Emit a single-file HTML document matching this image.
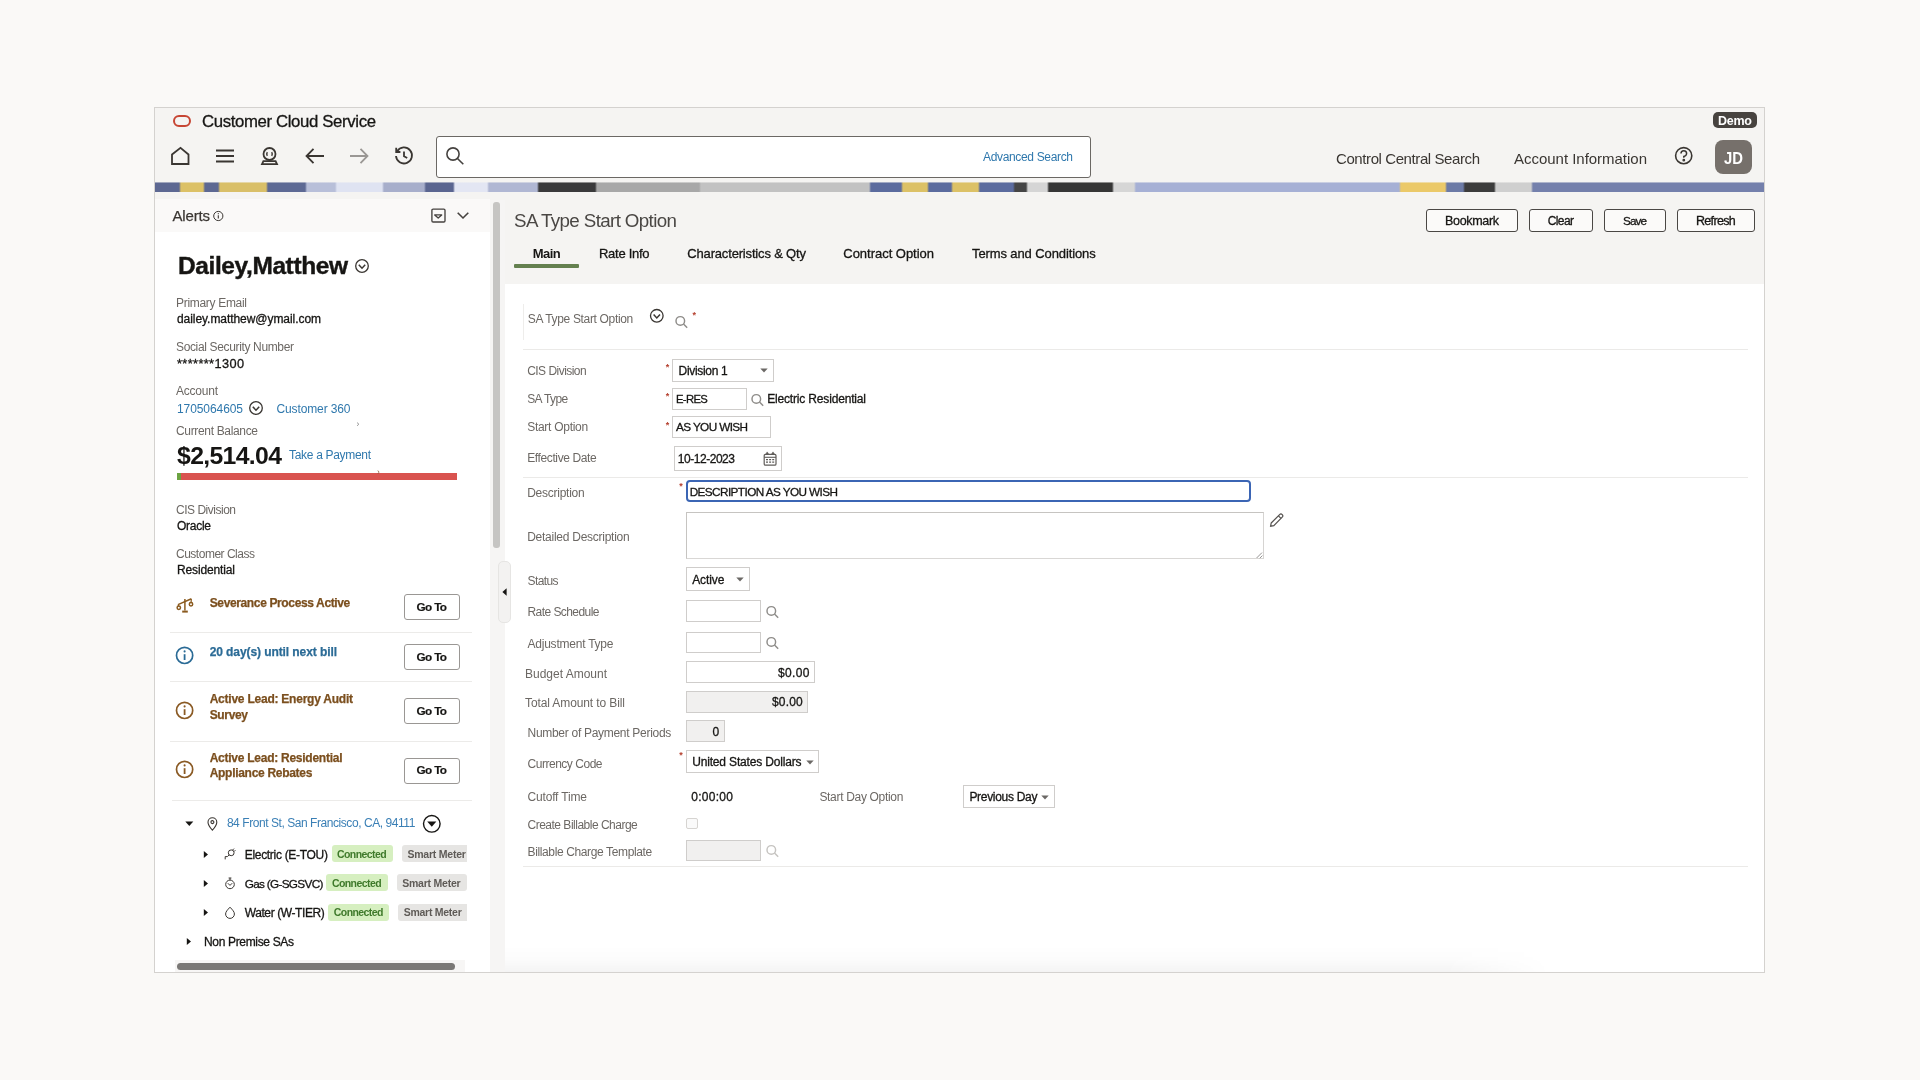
<!DOCTYPE html>
<html lang="en"><head><meta charset="utf-8"><title>SA Type Start Option</title>
<style>
html,body{margin:0;padding:0}
body{width:1920px;height:1080px;position:relative;overflow:hidden;background:#faf9f7;font-family:"Liberation Sans",sans-serif;color:#161513}
.a{position:absolute;box-sizing:border-box}
.t{position:absolute;white-space:nowrap;font-family:"Liberation Sans",sans-serif}
svg{position:absolute;overflow:visible}
.in{position:absolute;box-sizing:border-box;border:1px solid #cfcdcb;background:#fff}
.ro{background:#f1f0ef}
.btn{position:absolute;box-sizing:border-box;border:1px solid #4a4744;border-radius:3px;background:#fbfaf9}
.hr{position:absolute;height:1px;background:#ebeae8}
.bg{position:absolute;border-radius:3px}
#texts{position:absolute;left:0;top:0;width:1920px;height:1080px;will-change:transform}

</style></head>
<body>
<!-- app frame -->
<div class="a" style="left:154px;top:107px;width:1611px;height:866px;border:1px solid #d4d2cf;background:#f5f4f2"></div>
<!-- decorative strip -->
<div class="a" id="strip" style="left:155px;top:183px;width:1609px;height:9px;background:linear-gradient(90deg,#5d6892 0px,#5d6892 24px,#dcc166 26px,#dcc166 48px,#5d6892 50px,#5d6892 63px,#d9bf68 65px,#d9bf68 111px,#5d6994 113px,#5d6994 150px,#b8bfd9 152px,#b8bfd9 180px,#dfe3f2 182px,#dfe3f2 227px,#a7aecb 229px,#a7aecb 269px,#5a6590 271px,#5a6590 298px,#e3e6f3 300px,#e3e6f3 332px,#b0b7d3 334px,#b0b7d3 382px,#3a3a3b 384px,#3a3a3b 440px,#a8a8a8 442px,#a8a8a8 544px,#c2c2c2 546px,#c2c2c2 714px,#5b6b9e 716px,#5b6b9e 746px,#dcc166 748px,#dcc166 772px,#5b6b9e 774px,#5b6b9e 796px,#dcc166 798px,#dcc166 823px,#5b6b9e 825px,#5b6b9e 858px,#454545 860px,#454545 871px,#d5d5d5 873px,#d5d5d5 892px,#363636 894px,#363636 957px,#d6d6d6 959px,#d6d6d6 979px,#a6b0d5 981px,#a6b0d5 1244px,#ebc969 1246px,#ebc969 1290px,#6c7aa6 1292px,#6c7aa6 1308px,#3c3c3c 1310px,#3c3c3c 1339px,#cfcfcf 1341px,#cfcfcf 1376px,#7480ac 1378px,#7480ac 1608px)"></div>
<div class="a" style="left:155px;top:182px;width:1609px;height:1px;opacity:.55;background:linear-gradient(90deg,#5d6892 0px,#5d6892 24px,#dcc166 26px,#dcc166 48px,#5d6892 50px,#5d6892 63px,#d9bf68 65px,#d9bf68 111px,#5d6994 113px,#5d6994 150px,#b8bfd9 152px,#b8bfd9 180px,#dfe3f2 182px,#dfe3f2 227px,#a7aecb 229px,#a7aecb 269px,#5a6590 271px,#5a6590 298px,#e3e6f3 300px,#e3e6f3 332px,#b0b7d3 334px,#b0b7d3 382px,#3a3a3b 384px,#3a3a3b 440px,#a8a8a8 442px,#a8a8a8 544px,#c2c2c2 546px,#c2c2c2 714px,#5b6b9e 716px,#5b6b9e 746px,#dcc166 748px,#dcc166 772px,#5b6b9e 774px,#5b6b9e 796px,#dcc166 798px,#dcc166 823px,#5b6b9e 825px,#5b6b9e 858px,#454545 860px,#454545 871px,#d5d5d5 873px,#d5d5d5 892px,#363636 894px,#363636 957px,#d6d6d6 959px,#d6d6d6 979px,#a6b0d5 981px,#a6b0d5 1244px,#ebc969 1246px,#ebc969 1290px,#6c7aa6 1292px,#6c7aa6 1308px,#3c3c3c 1310px,#3c3c3c 1339px,#cfcfcf 1341px,#cfcfcf 1376px,#7480ac 1378px,#7480ac 1608px)"></div>

<!-- oracle logo -->
<div class="a" style="left:173px;top:115px;width:18px;height:12px;border:2px solid #c74634;border-radius:6px"></div>
<!-- Demo badge -->
<div class="a" style="left:1713px;top:112px;width:44px;height:16px;border-radius:5px;background:#47433f"></div>
<!-- search box -->
<div class="a" style="left:436px;top:136px;width:655px;height:42px;border:1px solid #6b6864;border-radius:3px;background:#fff"></div>
<!-- avatar -->
<div class="a" style="left:1715px;top:140px;width:37px;height:34px;border-radius:8px;background:#76706b"></div>

<!-- toolbar icons -->
<svg style="left:170px;top:146px" width="20" height="20" viewBox="0 0 20 20" fill="none" stroke="#3a3632" stroke-width="1.8" stroke-linejoin="miter"><path d="M2 18 V8.5 L10.5 1.8 L18.5 8.5 V18 Z"/></svg>
<svg style="left:215px;top:147px" width="20" height="18" viewBox="0 0 20 18" fill="none" stroke="#3a3632" stroke-width="1.8"><path d="M1 3.5H19M1 9H19M1 14.5H19"/></svg>
<svg style="left:259px;top:146px" width="20" height="20" viewBox="0 0 20 20" fill="none" stroke="#3a3632" stroke-width="1.8"><circle cx="10.5" cy="8" r="6"/><path d="M8.3 6.2 Q7.2 8 8.3 9.8M12.7 6.2 Q13.8 8 12.7 9.8" stroke-width="1.4"/><path d="M3 18.2 L4.4 15.2 H16.6 L18 18.2 Z"/></svg>
<svg style="left:305px;top:147px" width="20" height="18" viewBox="0 0 20 18" fill="none" stroke="#3a3632" stroke-width="1.8"><path d="M19 9H2M8.5 1.8 L1.5 9 L8.5 16.2"/></svg>
<svg style="left:349px;top:147px" width="20" height="18" viewBox="0 0 20 18" fill="none" stroke="#9a9794" stroke-width="1.8"><path d="M1 9H18M11.5 1.8 L18.5 9 L11.5 16.2"/></svg>
<svg style="left:394px;top:146px" width="20" height="20" viewBox="0 0 20 20" fill="none" stroke="#3a3632" stroke-width="1.8"><path d="M3.2 5.2 A8 8 0 1 1 2 10"/><path d="M2.2 1.8 V6 H6.4"/><path d="M10 5.5 V10.3 L13.2 12"/></svg>
<svg style="left:444.7px;top:146.2px" width="20" height="20" viewBox="0 0 20 20" fill="none" stroke="#45423f" stroke-width="1.6"><circle cx="8" cy="8" r="6.1"/><path d="M12.5 12.5 L18.3 18.3"/></svg>
<!-- help -->
<svg style="left:1674px;top:146.2px" width="20" height="20" viewBox="0 0 20 20" fill="none" stroke="#3a3632" stroke-width="1.6"><circle cx="9.7" cy="9.7" r="8.1"/><path d="M7 7.6 A2.8 2.8 0 1 1 9.8 10.4 V11.8" stroke-width="1.5"/><circle cx="9.8" cy="14.2" r="0.6" fill="#3a3632"/></svg>

<!-- LEFT PANEL -->
<div class="a" style="left:155px;top:199px;width:335px;height:773px;background:#fff"></div>
<div class="a" style="left:155px;top:199px;width:335px;height:33px;background:#faf9f8"></div>
<!-- gap + scrollbar -->
<div class="a" style="left:490px;top:192px;width:15px;height:780px;background:#f5f4f2"></div>
<div class="a" style="left:490px;top:200px;width:15px;height:772px;background:#f6f5f4"></div>
<div class="a" style="left:493px;top:202px;width:7px;height:345.5px;background:#c6c5c3;border-radius:3px"></div>

<!-- alerts header icons -->
<svg style="left:212px;top:210px" width="12" height="12" viewBox="0 0 12 12" fill="none" stroke="#3a3632" stroke-width="1"><circle cx="6.3" cy="6" r="4.6"/><path d="M6.3 5.3V8.6" stroke-width="1.1"/><circle cx="6.3" cy="3.7" r="0.6" fill="#3a3632" stroke="none"/></svg>
<svg style="left:430px;top:208px" width="16" height="16" viewBox="0 0 16 16" fill="none" stroke="#45423f" stroke-width="1.35" stroke-linejoin="round"><rect x="1.9" y="1.1" width="13.1" height="12.9" rx="1.2"/><path d="M4.7 6.9 H11.7 L8.2 10.1Z" stroke-width="1.3"/></svg>
<svg style="left:456px;top:211px" width="14" height="10" viewBox="0 0 14 10" fill="none" stroke="#45423f" stroke-width="1.6"><path d="M1.7 1.8 L7 7 L12.3 1.8"/></svg>
<!-- name chevron -->
<svg style="left:354px;top:258px" width="16" height="16" viewBox="0 0 16 16" fill="none" stroke="#3a3632" stroke-width="1.3"><circle cx="8" cy="8" r="6.3"/><path d="M4.8 6.8 L8 10.2 L11.2 6.8" stroke-width="1.5"/></svg>
<!-- account chevron -->
<svg style="left:248px;top:400px" width="16" height="16" viewBox="0 0 16 16" fill="none" stroke="#3a3632" stroke-width="1.3"><circle cx="8" cy="8" r="6.3"/><path d="M4.8 6.8 L8 10.2 L11.2 6.8" stroke-width="1.5"/></svg>
<!-- balance bar -->
<div class="a" style="left:177px;top:473px;width:280px;height:7px;background:#d9534f"></div>
<div class="a" style="left:177px;top:473px;width:4px;height:7px;background:#6ca342"></div>

<!-- alert rows -->
<div class="btn" style="left:404px;top:594px;width:56px;height:26px;background:#fff;border-color:#9a9794"></div>
<div class="btn" style="left:404px;top:643.5px;width:56px;height:26px;background:#fff;border-color:#9a9794"></div>
<div class="btn" style="left:404px;top:698px;width:56px;height:26px;background:#fff;border-color:#9a9794"></div>
<div class="btn" style="left:404px;top:757.5px;width:56px;height:26px;background:#fff;border-color:#9a9794"></div>
<div class="hr" style="left:170px;top:632px;width:302px;background:#ecebe9"></div>
<div class="hr" style="left:170px;top:681px;width:302px;background:#ecebe9"></div>
<div class="hr" style="left:170px;top:741px;width:302px;background:#ecebe9"></div>
<div class="hr" style="left:172px;top:800px;width:300px;background:#ecebe9"></div>
<!-- scales icon -->
<svg style="left:176px;top:597px" width="18" height="17" viewBox="0 0 18 17" fill="none" stroke="#8a5a1e" stroke-width="1.5"><path d="M2 7.6 L15.4 1.8"/><path d="M8.9 2 V13.6"/><path d="M6.2 14.6 H11.8" stroke-width="2"/><circle cx="2.8" cy="10.8" r="1.7"/><circle cx="15" cy="7.2" r="1.7"/><path d="M2.2 7.6 L2.7 9.2M15.3 2 L15.1 5.4" stroke-width="1.2"/></svg>
<!-- info icons -->
<svg style="left:175px;top:646px" width="19" height="19" viewBox="0 0 19 19" fill="none" stroke="#2b6b96" stroke-width="1.7"><circle cx="9.6" cy="9.4" r="8.1"/><path d="M9.6 8.2V14" stroke-width="1.8"/><circle cx="9.6" cy="5.4" r="1.05" fill="#2b6b96" stroke="none"/></svg>
<svg style="left:175px;top:700.5px" width="19" height="19" viewBox="0 0 19 19" fill="none" stroke="#8a5a24" stroke-width="1.7"><circle cx="9.6" cy="9.4" r="8.1"/><path d="M9.6 8.2V14" stroke-width="1.8"/><circle cx="9.6" cy="5.4" r="1.05" fill="#8a5a24" stroke="none"/></svg>
<svg style="left:175px;top:760px" width="19" height="19" viewBox="0 0 19 19" fill="none" stroke="#8a5a24" stroke-width="1.7"><circle cx="9.6" cy="9.4" r="8.1"/><path d="M9.6 8.2V14" stroke-width="1.8"/><circle cx="9.6" cy="5.4" r="1.05" fill="#8a5a24" stroke="none"/></svg>

<!-- premise tree -->
<svg style="left:185px;top:821px" width="9" height="6" viewBox="0 0 9 6"><path d="M0.3 0.5 H8.3 L4.3 5Z" fill="#161513"/></svg>
<svg style="left:207px;top:817px" width="11" height="14" viewBox="0 0 11 14" fill="none" stroke="#3a3632" stroke-width="1.1"><path d="M5.4 13.2 C2.4 9.8 1 7.6 1 5.2 A4.4 4.4 0 0 1 9.8 5.2 C9.8 7.6 8.4 9.8 5.4 13.2Z"/><circle cx="5.4" cy="5.1" r="1.5"/></svg>
<svg style="left:422px;top:814px" width="20" height="20" viewBox="0 0 20 20" fill="none" stroke="#161513" stroke-width="1.4"><circle cx="9.8" cy="9.8" r="8.3"/><path d="M5.2 7.6 H14.4 L9.8 12.8Z" fill="#161513" stroke="none"/></svg>
<svg style="left:203px;top:850px" width="6" height="9" viewBox="0 0 6 9"><path d="M0.8 0.9 V8.1 L5 4.5Z" fill="#161513"/></svg>
<svg style="left:203px;top:879px" width="6" height="9" viewBox="0 0 6 9"><path d="M0.8 0.9 V8.1 L5 4.5Z" fill="#161513"/></svg>
<svg style="left:203px;top:908px" width="6" height="9" viewBox="0 0 6 9"><path d="M0.8 0.9 V8.1 L5 4.5Z" fill="#161513"/></svg>
<svg style="left:186px;top:937px" width="6" height="9" viewBox="0 0 6 9"><path d="M0.8 0.9 V8.1 L5 4.5Z" fill="#161513"/></svg>
<!-- service icons -->
<svg style="left:224px;top:848px" width="12" height="12" viewBox="0 0 12 12" fill="none" stroke="#3a3632" stroke-width="1"><circle cx="7.2" cy="4.8" r="2.9"/><path d="M5.2 6.9 L3.4 8.6 H1.2 V11.4"/><path d="M8.6 2 L10 0.6M10 3.6 L11.4 2.2"/></svg>
<svg style="left:224px;top:877px" width="12" height="13" viewBox="0 0 12 13" fill="none" stroke="#3a3632" stroke-width="1"><circle cx="6" cy="7.4" r="4.3"/><path d="M6 3 V1M4.6 1 H7.4"/><path d="M3.8 6.2 L6 8.4 L8.2 6.2"/></svg>
<svg style="left:224px;top:906px" width="12" height="13" viewBox="0 0 12 13" fill="none" stroke="#3a3632" stroke-width="1"><path d="M6 1.2 C8.6 4 10.4 5.8 10.4 8 A4.4 4.4 0 0 1 1.6 8 C1.6 5.8 3.4 4 6 1.2Z"/></svg>
<!-- badges -->
<div class="bg" style="left:331.5px;top:845px;width:61px;height:17px;background:#d6efc0"></div>
<div class="bg" style="left:326.3px;top:874.4px;width:61.5px;height:17px;background:#d6efc0"></div>
<div class="bg" style="left:328px;top:904px;width:61px;height:17px;background:#d6efc0"></div>
<div class="bg" style="left:401.6px;top:845px;width:65.4px;height:17px;background:#e6e5e3;border-radius:3px 0 0 3px"></div>
<div class="bg" style="left:396.6px;top:874.4px;width:70px;height:17px;background:#e6e5e3"></div>
<div class="bg" style="left:398.4px;top:904px;width:68.6px;height:17px;background:#e6e5e3;border-radius:3px 0 0 3px"></div>
<!-- horizontal scrollbar -->
<div class="a" style="left:175px;top:960px;width:290px;height:12px;background:#f7f6f5"></div>
<div class="a" style="left:176.5px;top:962.6px;width:278.5px;height:7.8px;background:#7a7876;border-radius:4px"></div>

<!-- MAIN PANEL -->
<div class="a" style="left:505px;top:284px;width:1259px;height:688px;background:#fff"></div>
<div class="a" style="left:505px;top:946px;width:1045px;height:26px;background:linear-gradient(180deg,rgba(0,0,0,0) 0,rgba(0,0,0,0.012) 50%,rgba(0,0,0,0.045) 100%);-webkit-mask-image:linear-gradient(90deg,#000 90%,transparent)"></div>
<!-- tab underline -->
<div class="a" style="left:514px;top:264px;width:65px;height:4.3px;background:#64804f;border-radius:1px"></div>
<!-- buttons -->
<div class="btn" style="left:1426px;top:209px;width:92px;height:23px"></div>
<div class="btn" style="left:1528.5px;top:209px;width:64.5px;height:23px"></div>
<div class="btn" style="left:1604px;top:209px;width:62px;height:23px"></div>
<div class="btn" style="left:1676.5px;top:209px;width:78.5px;height:23px"></div>

<!-- form -->
<div class="a" style="left:523px;top:304px;width:1px;height:36px;background:#eeedeb"></div>
<div class="hr" style="left:523px;top:348.5px;width:1225px"></div>
<div class="hr" style="left:523px;top:477px;width:1225px"></div>
<div class="hr" style="left:523px;top:866.4px;width:1225px"></div>
<svg style="left:649px;top:308px" width="16" height="16" viewBox="0 0 16 16" fill="none" stroke="#3a3632" stroke-width="1.3"><circle cx="7.8" cy="7.8" r="6.3"/><path d="M4.6 6.6 L7.8 10 L11 6.6" stroke-width="1.5"/></svg>
<svg class="mag" style="left:675px;top:315px" width="14" height="14" viewBox="0 0 14 14" fill="none" stroke="#8f8d8a" stroke-width="1.45"><circle cx="5.3" cy="5.9" r="4.3"/><path d="M8.5 9.1 L12.2 12.8"/></svg>

<div class="in" style="left:672px;top:359px;width:102px;height:22.5px"></div>
<svg style="left:760px;top:368px" width="8" height="5" viewBox="0 0 8 5"><path d="M0.3 0.5 H7.7 L4 4.4Z" fill="#6b6865"/></svg>
<div class="in" style="left:672px;top:388px;width:75px;height:21.5px"></div>
<svg class="mag" style="left:750.5px;top:393px" width="14" height="14" viewBox="0 0 14 14" fill="none" stroke="#8f8d8a" stroke-width="1.45"><circle cx="5.3" cy="5.9" r="4.3"/><path d="M8.5 9.1 L12.2 12.8"/></svg>
<div class="in" style="left:672px;top:416px;width:99px;height:21.5px"></div>
<div class="in" style="left:674px;top:445.5px;width:107.5px;height:25px"></div>
<!-- calendar -->
<svg style="left:763px;top:450.5px" width="14" height="15" viewBox="0 0 14 15" fill="none" stroke="#5f5c59" stroke-width="1.2"><rect x="1.2" y="3.4" width="11.8" height="10.8" rx="1.3"/><path d="M1.2 6.3H13" stroke-width="1.1"/><path d="M2.6 3.4 L4.2 0.9 L5.8 3.4ZM8.4 3.4 L10 0.9 L11.6 3.4Z" fill="#5f5c59" stroke-width="0.6"/><path d="M3 8.6H11.2M3 11.2H11.2" stroke-width="1.3" stroke-dasharray="2 1.1"/></svg>

<div class="a" style="left:685.5px;top:480px;width:565px;height:22px;border:2px solid #3b65b4;border-radius:4px;background:#fff"></div>
<div class="in" style="left:685.5px;top:512px;width:578px;height:47px;border-color:#c6c4c1 #d6d4d2 #d9d7d5 #c6c4c1"></div>
<svg style="left:1256px;top:552px" width="7" height="7" viewBox="0 0 7 7" stroke="#8a8886" stroke-width="0.9"><path d="M6 0.6 L0.6 6M6.4 3.6 L3.8 6.2"/></svg>
<!-- pencil -->
<svg style="left:1269px;top:512px" width="16" height="16" viewBox="0 0 16 16" fill="none" stroke="#55524f" stroke-width="1.2"><path d="M2.2 11 L10.6 2.6 A1.7 1.7 0 0 1 13.2 5.2 L4.8 13.6 L1.6 14.2Z"/><path d="M9.4 3.8 L12 6.4"/></svg>

<div class="in" style="left:685.5px;top:567.4px;width:64px;height:23.4px"></div>
<svg style="left:736px;top:577px" width="8" height="5" viewBox="0 0 8 5"><path d="M0.3 0.5 H7.7 L4 4.4Z" fill="#6b6865"/></svg>
<div class="in" style="left:685.5px;top:600.4px;width:75px;height:21.2px"></div>
<svg class="mag" style="left:765.5px;top:604.5px" width="14" height="14" viewBox="0 0 14 14" fill="none" stroke="#8f8d8a" stroke-width="1.45"><circle cx="5.3" cy="5.9" r="4.3"/><path d="M8.5 9.1 L12.2 12.8"/></svg>
<div class="in" style="left:685.5px;top:632.3px;width:75px;height:20.6px"></div>
<svg class="mag" style="left:765.5px;top:636px" width="14" height="14" viewBox="0 0 14 14" fill="none" stroke="#8f8d8a" stroke-width="1.45"><circle cx="5.3" cy="5.9" r="4.3"/><path d="M8.5 9.1 L12.2 12.8"/></svg>
<div class="in" style="left:685.5px;top:661.4px;width:129px;height:21.2px"></div>
<div class="in ro" style="left:685.5px;top:691px;width:122.5px;height:21.5px"></div>
<div class="in ro" style="left:685.5px;top:720.4px;width:39.5px;height:21.2px"></div>
<div class="in" style="left:686px;top:750.3px;width:133px;height:23px"></div>
<svg style="left:805.5px;top:759.5px" width="8" height="5" viewBox="0 0 8 5"><path d="M0.3 0.5 H7.7 L4 4.4Z" fill="#6b6865"/></svg>
<div class="in" style="left:962.5px;top:785.3px;width:92.5px;height:22.5px"></div>
<svg style="left:1040.5px;top:794.5px" width="8" height="5" viewBox="0 0 8 5"><path d="M0.3 0.5 H7.7 L4 4.4Z" fill="#6b6865"/></svg>
<div class="a" style="left:685.5px;top:817.5px;width:12px;height:11.5px;border:1px solid #d6d4d1;border-radius:2px;background:#fafafa"></div>
<div class="in ro" style="left:685.5px;top:840px;width:75px;height:21px"></div>
<svg class="mag" style="left:765.5px;top:843.5px" width="14" height="14" viewBox="0 0 14 14" fill="none" stroke="#c6c4c1" stroke-width="1.45"><circle cx="5.3" cy="5.9" r="4.3"/><path d="M8.5 9.1 L12.2 12.8"/></svg>
<!-- splitter handle -->
<div class="a" style="left:497.5px;top:560.5px;width:13px;height:62.5px;background:#f3f2f1;border:1px solid #e6e5e3;border-radius:5px"></div>
<svg style="left:502.3px;top:587.5px" width="5" height="8" viewBox="0 0 5 8"><path d="M4.6 0.3 V7.7 L0.4 4 Z" fill="#161513"/></svg>

<div id="texts">
<span class="t" style="left:202px;top:111.56px;font-size:16.75px;line-height:19.262px;letter-spacing:-0.359px;-webkit-text-stroke:0.3px;">Customer Cloud Service</span>
<span class="t" style="left:1718px;top:114.48px;font-size:12.5px;line-height:14.375px;font-weight:700;color:#ffffff;letter-spacing:-0.245px;">Demo</span>
<span class="t" style="left:983px;top:150.94px;font-size:12.0px;line-height:13.800px;color:#2f78ad;letter-spacing:-0.338px;">Advanced Search</span>
<span class="t" style="left:1336px;top:150.18px;font-size:15.0px;line-height:17.250px;color:#3a3632;letter-spacing:-0.408px;">Control Central Search</span>
<span class="t" style="left:1514px;top:150.18px;font-size:15.0px;line-height:17.250px;color:#3a3632;letter-spacing:-0.023px;">Account Information</span>
<span class="t" style="left:1724px;top:149.10px;font-size:17.25px;line-height:19.837px;font-weight:700;color:#ffffff;transform:scaleX(0.86);transform-origin:0 0;">JD</span>
<span class="t" style="left:172.5px;top:207.18px;font-size:15.0px;line-height:17.250px;color:#3a3632;letter-spacing:-0.169px;-webkit-text-stroke:0.25px;">Alerts</span>
<span class="t" style="left:178px;top:252.42px;font-size:24.5px;line-height:28.175px;font-weight:700;letter-spacing:-0.399px;-webkit-text-stroke:0.4px;">Dailey,Matthew</span>
<span class="t" style="left:176px;top:296.94px;font-size:12.0px;line-height:13.800px;color:#6c6864;letter-spacing:-0.306px;">Primary Email</span>
<span class="t" style="left:177px;top:312.94px;font-size:12.0px;line-height:13.800px;letter-spacing:-0.058px;-webkit-text-stroke:0.3px;">dailey.matthew@ymail.com</span>
<span class="t" style="left:176px;top:340.94px;font-size:12.0px;line-height:13.800px;color:#6c6864;letter-spacing:-0.352px;">Social Security Number</span>
<span class="t" style="left:177px;top:357.25px;font-size:12.75px;line-height:14.662px;letter-spacing:0.389px;-webkit-text-stroke:0.3px;">*******1300</span>
<span class="t" style="left:176px;top:384.94px;font-size:12.0px;line-height:13.800px;color:#6c6864;letter-spacing:-0.227px;">Account</span>
<span class="t" style="left:177px;top:402.94px;font-size:12.0px;line-height:13.800px;color:#2f78ad;letter-spacing:-0.083px;">1705064605</span>
<span class="t" style="left:276.5px;top:402.94px;font-size:12.0px;line-height:13.800px;color:#2f78ad;letter-spacing:-0.125px;">Customer 360</span>
<span class="t" style="left:176px;top:424.94px;font-size:12.0px;line-height:13.800px;color:#6c6864;letter-spacing:-0.337px;">Current Balance</span>
<span class="t" style="left:177px;top:442.19px;font-size:24.75px;line-height:28.462px;font-weight:700;letter-spacing:-0.639px;">$2,514.04</span>
<span class="t" style="left:289px;top:448.94px;font-size:12.0px;line-height:13.800px;color:#2f78ad;letter-spacing:-0.311px;">Take a Payment</span>
<span class="t" style="left:176px;top:503.94px;font-size:12.0px;line-height:13.800px;color:#6c6864;letter-spacing:-0.487px;">CIS Division</span>
<span class="t" style="left:177px;top:519.94px;font-size:12.0px;line-height:13.800px;letter-spacing:-0.269px;-webkit-text-stroke:0.3px;">Oracle</span>
<span class="t" style="left:176px;top:547.94px;font-size:12.0px;line-height:13.800px;color:#6c6864;letter-spacing:-0.489px;">Customer Class</span>
<span class="t" style="left:177px;top:563.94px;font-size:12.0px;line-height:13.800px;letter-spacing:-0.138px;-webkit-text-stroke:0.3px;">Residential</span>
<span class="t" style="left:356.5px;top:420.40px;font-size:8.25px;line-height:9.487px;color:#777;">&rsaquo;</span>
<span class="t" style="left:377px;top:468.40px;font-size:8.25px;line-height:9.487px;color:#8a5a3a;">&rsaquo;</span>
<span class="t" style="left:209.7px;top:596.94px;font-size:12.0px;line-height:13.800px;font-weight:700;color:#7b4f1e;letter-spacing:-0.365px;-webkit-text-stroke:0.25px;">Severance Process Active</span>
<span class="t" style="left:209.7px;top:645.94px;font-size:12.0px;line-height:13.800px;font-weight:700;color:#2b6b96;letter-spacing:-0.086px;-webkit-text-stroke:0.25px;">20 day(s) until next bill</span>
<span class="t" style="left:209.7px;top:692.94px;font-size:12.0px;line-height:13.800px;font-weight:700;color:#7b4f1e;letter-spacing:-0.234px;-webkit-text-stroke:0.25px;">Active Lead: Energy Audit</span>
<span class="t" style="left:209.7px;top:708.94px;font-size:12.0px;line-height:13.800px;font-weight:700;color:#7b4f1e;letter-spacing:-0.346px;-webkit-text-stroke:0.25px;">Survey</span>
<span class="t" style="left:209.7px;top:751.94px;font-size:12.0px;line-height:13.800px;font-weight:700;color:#7b4f1e;letter-spacing:-0.257px;-webkit-text-stroke:0.25px;">Active Lead: Residential</span>
<span class="t" style="left:209.7px;top:766.94px;font-size:12.0px;line-height:13.800px;font-weight:700;color:#7b4f1e;letter-spacing:-0.292px;-webkit-text-stroke:0.25px;">Appliance Rebates</span>
<span class="t" style="left:416.5px;top:600.17px;font-size:11.75px;line-height:13.512px;font-weight:700;letter-spacing:-0.645px;-webkit-text-stroke:0.2px;">Go To</span>
<span class="t" style="left:416.5px;top:650.17px;font-size:11.75px;line-height:13.512px;font-weight:700;letter-spacing:-0.645px;-webkit-text-stroke:0.2px;">Go To</span>
<span class="t" style="left:416.5px;top:704.17px;font-size:11.75px;line-height:13.512px;font-weight:700;letter-spacing:-0.645px;-webkit-text-stroke:0.2px;">Go To</span>
<span class="t" style="left:416.5px;top:763.17px;font-size:11.75px;line-height:13.512px;font-weight:700;letter-spacing:-0.645px;-webkit-text-stroke:0.2px;">Go To</span>
<span class="t" style="left:226.9px;top:816.94px;font-size:12.0px;line-height:13.800px;color:#3a7fb5;letter-spacing:-0.442px;">84 Front St, San Francisco, CA, 94111</span>
<span class="t" style="left:244.7px;top:848.94px;font-size:12.0px;line-height:13.800px;letter-spacing:-0.299px;-webkit-text-stroke:0.3px;">Electric (E-TOU)</span>
<span class="t" style="left:244.7px;top:877.17px;font-size:11.75px;line-height:13.512px;letter-spacing:-0.679px;-webkit-text-stroke:0.3px;">Gas (G-SGSVC)</span>
<span class="t" style="left:244.7px;top:906.94px;font-size:12.0px;line-height:13.800px;letter-spacing:-0.402px;-webkit-text-stroke:0.3px;">Water (W-TIER)</span>
<span class="t" style="left:204px;top:935.94px;font-size:12.0px;line-height:13.800px;letter-spacing:-0.336px;-webkit-text-stroke:0.3px;">Non Premise SAs</span>
<span class="t" style="left:337px;top:848.32px;font-size:10.5px;line-height:12.075px;font-weight:700;color:#3f7a2b;letter-spacing:-0.583px;">Connected</span>
<span class="t" style="left:331.9px;top:877.32px;font-size:10.5px;line-height:12.075px;font-weight:700;color:#3f7a2b;letter-spacing:-0.571px;">Connected</span>
<span class="t" style="left:333.8px;top:906.32px;font-size:10.5px;line-height:12.075px;font-weight:700;color:#3f7a2b;letter-spacing:-0.583px;">Connected</span>
<span class="t" style="left:407.4px;top:848.32px;font-size:10.5px;line-height:12.075px;font-weight:700;color:#5f5b57;letter-spacing:-0.220px;">Smart Meter</span>
<span class="t" style="left:402.2px;top:877.32px;font-size:10.5px;line-height:12.075px;font-weight:700;color:#5f5b57;letter-spacing:-0.220px;">Smart Meter</span>
<span class="t" style="left:403.7px;top:906.32px;font-size:10.5px;line-height:12.075px;font-weight:700;color:#5f5b57;letter-spacing:-0.260px;">Smart Meter</span>
<span class="t" style="left:514px;top:209.72px;font-size:18.75px;line-height:21.562px;color:#4a4744;letter-spacing:-0.619px;">SA Type Start Option</span>
<span class="t" style="left:532.7px;top:247.02px;font-size:13.0px;line-height:14.950px;font-weight:700;letter-spacing:-0.542px;">Main</span>
<span class="t" style="left:599px;top:247.02px;font-size:13.0px;line-height:14.950px;letter-spacing:-0.283px;-webkit-text-stroke:0.3px;">Rate Info</span>
<span class="t" style="left:687.3px;top:247.02px;font-size:13.0px;line-height:14.950px;letter-spacing:-0.170px;-webkit-text-stroke:0.3px;">Characteristics &amp; Qty</span>
<span class="t" style="left:843.3px;top:247.02px;font-size:13.0px;line-height:14.950px;letter-spacing:-0.025px;-webkit-text-stroke:0.3px;">Contract Option</span>
<span class="t" style="left:972px;top:247.02px;font-size:13.0px;line-height:14.950px;letter-spacing:-0.107px;-webkit-text-stroke:0.3px;">Terms and Conditions</span>
<span class="t" style="left:1445px;top:214.48px;font-size:12.5px;line-height:14.375px;letter-spacing:-0.326px;-webkit-text-stroke:0.3px;">Bookmark</span>
<span class="t" style="left:1547.7px;top:214.94px;font-size:12.0px;line-height:13.800px;letter-spacing:-0.597px;-webkit-text-stroke:0.3px;">Clear</span>
<span class="t" style="left:1623px;top:214.17px;font-size:11.75px;line-height:13.512px;letter-spacing:-0.932px;-webkit-text-stroke:0.3px;">Save</span>
<span class="t" style="left:1696px;top:214.48px;font-size:12.5px;line-height:14.375px;letter-spacing:-0.680px;-webkit-text-stroke:0.3px;">Refresh</span>
<span class="t" style="left:527.8px;top:312.94px;font-size:12.0px;line-height:13.800px;color:#6c6864;letter-spacing:-0.334px;">SA Type Start Option</span>
<span class="t" style="left:527.2px;top:364.94px;font-size:12.0px;line-height:13.800px;color:#6c6864;letter-spacing:-0.533px;">CIS Division</span>
<span class="t" style="left:527.2px;top:392.94px;font-size:12.0px;line-height:13.800px;color:#6c6864;letter-spacing:-0.581px;">SA Type</span>
<span class="t" style="left:527.2px;top:420.94px;font-size:12.0px;line-height:13.800px;color:#6c6864;letter-spacing:-0.276px;">Start Option</span>
<span class="t" style="left:527.2px;top:451.94px;font-size:12.0px;line-height:13.800px;color:#6c6864;letter-spacing:-0.383px;">Effective Date</span>
<span class="t" style="left:527.2px;top:486.94px;font-size:12.0px;line-height:13.800px;color:#6c6864;letter-spacing:-0.253px;">Description</span>
<span class="t" style="left:527.2px;top:530.94px;font-size:12.0px;line-height:13.800px;color:#6c6864;letter-spacing:-0.257px;">Detailed Description</span>
<span class="t" style="left:527.5px;top:574.94px;font-size:12.0px;line-height:13.800px;color:#6c6864;letter-spacing:-0.606px;">Status</span>
<span class="t" style="left:527.5px;top:605.94px;font-size:12.0px;line-height:13.800px;color:#6c6864;letter-spacing:-0.561px;">Rate Schedule</span>
<span class="t" style="left:527.5px;top:637.94px;font-size:12.0px;line-height:13.800px;color:#6c6864;letter-spacing:-0.227px;">Adjustment Type</span>
<span class="t" style="left:525px;top:667.94px;font-size:12.0px;line-height:13.800px;color:#6c6864;letter-spacing:-0.005px;">Budget Amount</span>
<span class="t" style="left:525px;top:696.94px;font-size:12.0px;line-height:13.800px;color:#6c6864;letter-spacing:-0.109px;">Total Amount to Bill</span>
<span class="t" style="left:527.5px;top:726.94px;font-size:12.0px;line-height:13.800px;color:#6c6864;letter-spacing:-0.289px;">Number of Payment Periods</span>
<span class="t" style="left:527.5px;top:757.94px;font-size:12.0px;line-height:13.800px;color:#6c6864;letter-spacing:-0.475px;">Currency Code</span>
<span class="t" style="left:527.5px;top:790.94px;font-size:12.0px;line-height:13.800px;color:#6c6864;letter-spacing:-0.174px;">Cutoff Time</span>
<span class="t" style="left:819.4px;top:790.94px;font-size:12.0px;line-height:13.800px;color:#6c6864;letter-spacing:-0.315px;">Start Day Option</span>
<span class="t" style="left:527.5px;top:818.94px;font-size:12.0px;line-height:13.800px;color:#6c6864;letter-spacing:-0.497px;">Create Billable Charge</span>
<span class="t" style="left:527.5px;top:845.94px;font-size:12.0px;line-height:13.800px;color:#6c6864;letter-spacing:-0.370px;">Billable Charge Template</span>
<span class="t" style="left:678.6px;top:364.94px;font-size:12.0px;line-height:13.800px;letter-spacing:-0.315px;-webkit-text-stroke:0.3px;">Division 1</span>
<span class="t" style="left:676px;top:392.63px;font-size:11.25px;line-height:12.937px;letter-spacing:-0.648px;-webkit-text-stroke:0.3px;">E-RES</span>
<span class="t" style="left:767.2px;top:392.94px;font-size:12.0px;line-height:13.800px;letter-spacing:-0.171px;-webkit-text-stroke:0.3px;">Electric Residential</span>
<span class="t" style="left:676px;top:420.17px;font-size:11.75px;line-height:13.512px;letter-spacing:-0.614px;-webkit-text-stroke:0.3px;">AS YOU WISH</span>
<span class="t" style="left:677.8px;top:452.94px;font-size:12.0px;line-height:13.800px;letter-spacing:-0.466px;-webkit-text-stroke:0.3px;">10-12-2023</span>
<span class="t" style="left:689.7px;top:485.17px;font-size:11.75px;line-height:13.512px;letter-spacing:-0.579px;-webkit-text-stroke:0.3px;">DESCRIPTION AS YOU WISH</span>
<span class="t" style="left:692.2px;top:573.94px;font-size:12.0px;line-height:13.800px;letter-spacing:-0.097px;-webkit-text-stroke:0.3px;">Active</span>
<span class="t" style="left:778px;top:666.94px;font-size:12.0px;line-height:13.800px;letter-spacing:0.342px;-webkit-text-stroke:0.3px;">$0.00</span>
<span class="t" style="left:771.9px;top:695.94px;font-size:12.0px;line-height:13.800px;letter-spacing:0.217px;-webkit-text-stroke:0.3px;">$0.00</span>
<span class="t" style="left:712.5px;top:725.94px;font-size:12.0px;line-height:13.800px;-webkit-text-stroke:0.3px;">0</span>
<span class="t" style="left:692.2px;top:755.94px;font-size:12.0px;line-height:13.800px;letter-spacing:-0.166px;-webkit-text-stroke:0.3px;">United States Dollars</span>
<span class="t" style="left:691.3px;top:790.94px;font-size:12.0px;line-height:13.800px;letter-spacing:0.276px;-webkit-text-stroke:0.3px;">0:00:00</span>
<span class="t" style="left:969.4px;top:790.94px;font-size:12.0px;line-height:13.800px;letter-spacing:-0.298px;-webkit-text-stroke:0.3px;">Previous Day</span>
<span class="t" style="left:692.6px;top:309.71px;font-size:9px;line-height:10.350px;font-weight:700;color:#b5402f;">*</span>
<span class="t" style="left:665.8px;top:361.71px;font-size:9px;line-height:10.350px;font-weight:700;color:#b5402f;">*</span>
<span class="t" style="left:665.8px;top:390.71px;font-size:9px;line-height:10.350px;font-weight:700;color:#b5402f;">*</span>
<span class="t" style="left:665.8px;top:419.71px;font-size:9px;line-height:10.350px;font-weight:700;color:#b5402f;">*</span>
<span class="t" style="left:679.2px;top:480.71px;font-size:9px;line-height:10.350px;font-weight:700;color:#b5402f;">*</span>
<span class="t" style="left:679.2px;top:749.71px;font-size:9px;line-height:10.350px;font-weight:700;color:#b5402f;">*</span>
</div>
</body></html>
